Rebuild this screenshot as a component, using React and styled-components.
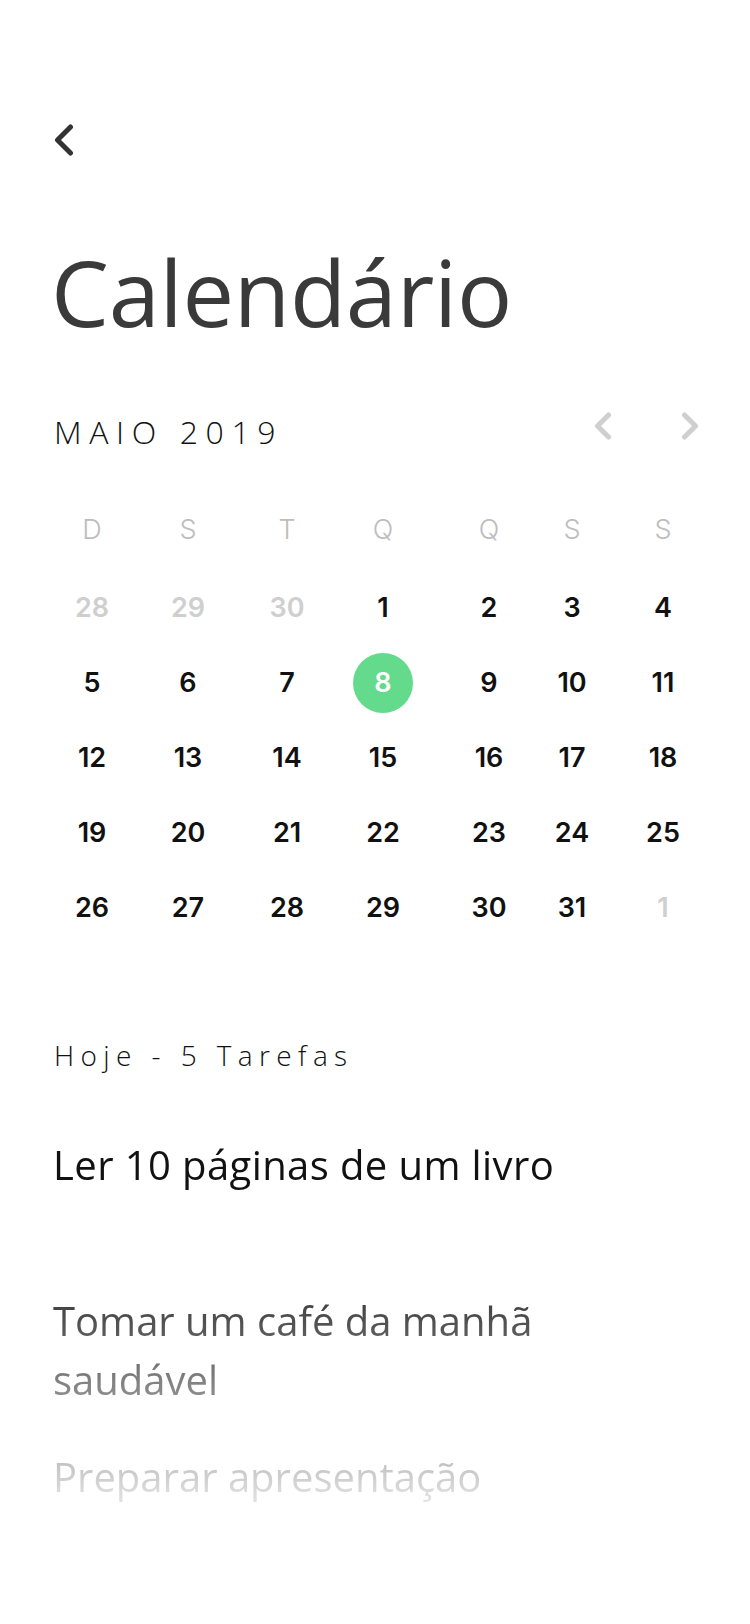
import React from "react";
import styled, { createGlobalStyle } from "styled-components";

const GlobalStyle = createGlobalStyle`
  html, body {
    margin: 0;
    padding: 0;
    background: #ffffff;
  }
  body {
    font-family: "Open Sans", "Noto Sans", sans-serif;
    -webkit-font-smoothing: antialiased;
  }
  *, *::before, *::after {
    box-sizing: border-box;
  }
`;

const COLUMNS = "72px 120px 78px 114px 98px 68px 114px";

const Screen = styled.main`
  width: 750px;
  min-height: 1624px;
  padding: 124px 51px 0 54px;
  display: flex;
  flex-direction: column;
  background: #ffffff;
  overflow: hidden;
`;

const IconButton = styled.button`
  border: none;
  background: none;
  padding: 0;
  margin: 0;
  display: flex;
  cursor: pointer;
  align-self: flex-start;
  color: ${(p) => p.$color || "#333333"};
`;

const Title = styled.h1`
  margin: 90px 0 0 -3px;
  font-family: "Open Sans", "Noto Sans", sans-serif;
  font-size: 92px;
  line-height: 92px;
  font-weight: 400;
  letter-spacing: -0.3px;
  color: #3a3a3a;
`;

const MonthRow = styled.div`
  margin-top: 74px;
  height: 40px;
  display: flex;
  justify-content: space-between;
  align-items: flex-start;
`;

const MonthLabel = styled.h2`
  margin: 0;
  font-size: 32px;
  line-height: 40px;
  font-weight: 300;
  letter-spacing: 7.6px;
  color: #111111;
`;

const NavGroup = styled.div`
  display: flex;
  gap: 69px;
`;

const WeekHeader = styled.div`
  margin-top: 58px;
  margin-left: 2px;
  display: grid;
  grid-template-columns: ${COLUMNS};
`;

const WeekdayCell = styled.span`
  font-family: "Inter", "Lato", sans-serif;
  font-size: 27px;
  line-height: 40px;
  font-weight: 300;
  color: #bdbdbd;
  text-align: center;
`;

const DaysGrid = styled.div`
  margin-top: 20px;
  margin-left: 2px;
  display: grid;
  grid-template-columns: ${COLUMNS};
  grid-auto-rows: 75px;
`;

const DayCell = styled.div`
  display: flex;
  align-items: center;
  justify-content: center;
`;

const DayNumber = styled.span`
  width: 60px;
  height: 60px;
  border-radius: 50%;
  display: flex;
  align-items: center;
  justify-content: center;
  font-family: "Inter", "Lato", sans-serif;
  font-size: 27px;
  font-weight: 600;
  line-height: 1;
  color: ${(p) => (p.$selected ? "#ffffff" : p.$muted ? "#cfcfcf" : "#111111")};
  background: ${(p) => (p.$selected ? "#64da8c" : "transparent")};
`;

const SectionTitle = styled.h3`
  margin: 92px 0 0;
  font-size: 28px;
  line-height: 36px;
  font-weight: 300;
  letter-spacing: 6.4px;
  color: #111111;
`;

const TaskList = styled.ul`
  list-style: none;
  margin: 62px 0 0 -1px;
  padding: 0;
  display: flex;
  flex-direction: column;
  gap: 38px;
  -webkit-mask-image: linear-gradient(to bottom, #000 108px, transparent 402px);
  mask-image: linear-gradient(to bottom, #000 108px, transparent 402px);
`;

const TaskItem = styled.li`
  min-height: 118px;
  max-width: 580px;
  font-size: 40px;
  line-height: 59px;
  font-weight: 400;
  letter-spacing: ${(p) => (p.$wide ? "0.4px" : "0")};
  color: #111111;
`;

const Chevron = ({ dir = "left", width, height, stroke }) => {
  const w = width;
  const h = height;
  const s = stroke / 2;
  const top = s + 0.5;
  const bottom = h - s - 0.5;
  const mid = h / 2;
  const points =
    dir === "left"
      ? `${w - s - 1},${top} ${s + 1},${mid} ${w - s - 1},${bottom}`
      : `${s + 1},${top} ${w - s - 1},${mid} ${s + 1},${bottom}`;
  return (
    <svg width={w} height={h} viewBox={`0 0 ${w} ${h}`} fill="none">
      <polyline
        points={points}
        stroke="currentColor"
        strokeWidth={stroke}
        strokeLinecap="round"
        strokeLinejoin="round"
      />
    </svg>
  );
};

const WEEKDAYS = ["D", "S", "T", "Q", "Q", "S", "S"];

const DAYS = [
  { n: 28, muted: true },
  { n: 29, muted: true },
  { n: 30, muted: true },
  ...Array.from({ length: 31 }, (_, i) => ({ n: i + 1, selected: i + 1 === 8 })),
  { n: 1, muted: true },
];

const TASKS = [
  { text: "Ler 10 páginas de um livro", wide: true },
  { text: "Tomar um café da manhã saudável" },
  { text: "Preparar apresentação" },
];

export default function App() {
  return (
    <>
      <GlobalStyle />
      <Screen>
        <IconButton aria-label="Voltar" $color="#333333">
          <Chevron dir="left" width={20} height={32} stroke={5} />
        </IconButton>

        <Title>Calendário</Title>

        <MonthRow>
          <MonthLabel>MAIO 2019</MonthLabel>
          <NavGroup>
            <IconButton aria-label="Mês anterior" $color="#cfcfcf">
              <Chevron dir="left" width={18} height={28} stroke={5} />
            </IconButton>
            <IconButton aria-label="Próximo mês" $color="#cfcfcf">
              <Chevron dir="right" width={18} height={28} stroke={5} />
            </IconButton>
          </NavGroup>
        </MonthRow>

        <WeekHeader>
          {WEEKDAYS.map((d, i) => (
            <WeekdayCell key={i}>{d}</WeekdayCell>
          ))}
        </WeekHeader>

        <DaysGrid>
          {DAYS.map((d, i) => (
            <DayCell key={i}>
              <DayNumber $muted={d.muted} $selected={d.selected}>
                {d.n}
              </DayNumber>
            </DayCell>
          ))}
        </DaysGrid>

        <SectionTitle>Hoje - 5 Tarefas</SectionTitle>

        <TaskList>
          {TASKS.map((t) => (
            <TaskItem key={t.text} $wide={t.wide}>
              {t.text}
            </TaskItem>
          ))}
        </TaskList>
      </Screen>
    </>
  );
}
